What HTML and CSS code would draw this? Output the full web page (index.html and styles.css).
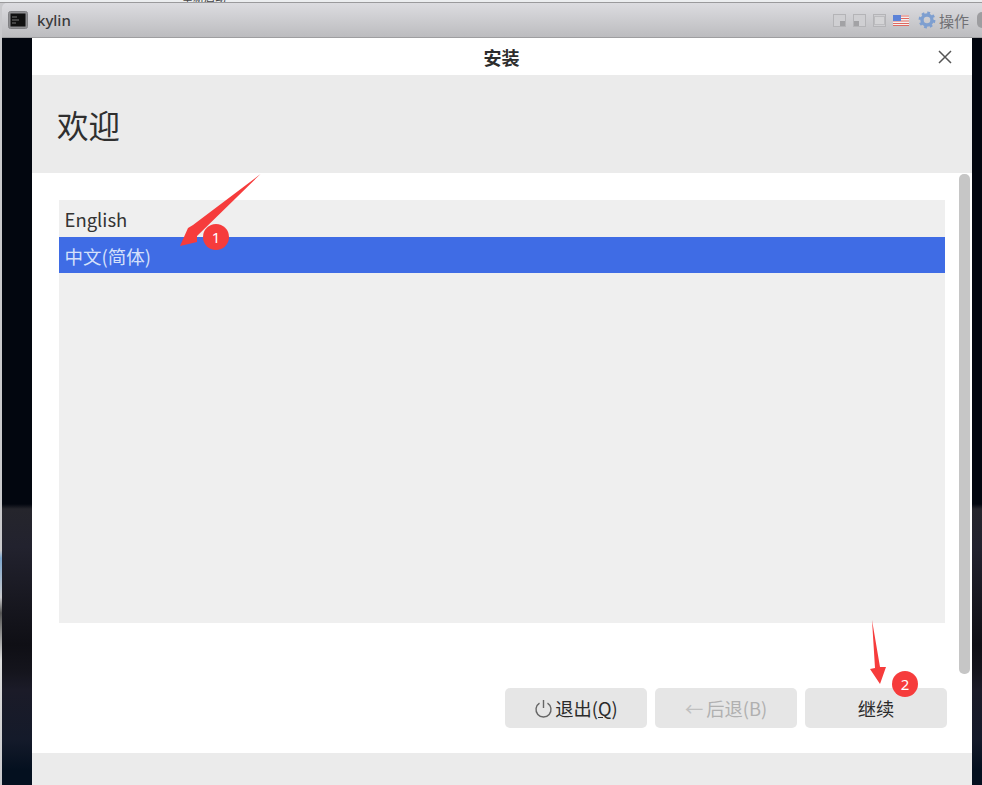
FILE: index.html
```html
<!DOCTYPE html>
<html lang="zh-CN">
<head>
<meta charset="utf-8">
<title>kylin</title>
<link rel="stylesheet" href="styles.css">
</head>
<body>
<div class="screen">
  <div class="topstrip"><span class="cut">重新启动</span></div>
  <div class="vmwindow">
    <header class="vmbar">
      <svg class="vmicon" width="20" height="18" viewBox="0 0 20 18"><rect x="0.5" y="0.5" width="19" height="17" rx="2" fill="#8f8f92" stroke="#808083"/><rect x="2.500" y="2.500" width="15" height="13" fill="#111"/><path d="M4 6h5M4 9h7M4 12h4" stroke="#777" stroke-width="1"/></svg>
      <span class="vmname">kylin</span>
      <div class="vmtools">
        <svg class="wbtn" width="13" height="13" viewBox="0 0 13 13"><rect x="0.5" y="0.5" width="12" height="12" fill="#cfcfd2" stroke="#b4b4b7"/><rect x="7" y="7" width="5" height="5" fill="#a2a2a5"/></svg>
        <svg class="wbtn" width="13" height="13" viewBox="0 0 13 13"><rect x="0.5" y="0.5" width="12" height="12" fill="#cfcfd2" stroke="#b4b4b7"/><rect x="1" y="7" width="5" height="5" fill="#a2a2a5"/></svg>
        <svg class="wbtn" width="13" height="13" viewBox="0 0 13 13"><rect x="0.5" y="0.5" width="12" height="12" fill="#cfcfd2" stroke="#b4b4b7"/><rect x="1.500" y="2.500" width="10" height="8" fill="#d4d4d6" stroke="#bcbcbf"/></svg>
        <svg class="flag" width="16" height="11" viewBox="0 0 16 11"><rect width="16" height="11" fill="#f2f2f2"/><path d="M0 1h16M0 3.500h16M0 6h16M0 8.500h16M0 10.500h16" stroke="#e0685f" stroke-width="1.100"/><rect width="8" height="6" fill="#5b82d8"/></svg>
        <svg class="gear" width="18" height="18" viewBox="0 0 18 18"><circle cx="9" cy="9" r="5" fill="none" stroke="#7e9fd0" stroke-width="3.400"/><circle cx="9" cy="9" r="7.200" fill="none" stroke="#7e9fd0" stroke-width="2.400" stroke-dasharray="2.800 2.860"/></svg>
        <span class="oplabel">操作</span>
        <span class="opdot"></span>
      </div>
    </header>
    <div class="desk">
      <main class="dialog">
        <div class="dlgtitle">
          <span class="dlgname">安装</span>
          <svg class="close" width="14" height="14" viewBox="0 0 14 14"><path d="M1 1l12 12M13 1L1 13" stroke="#555" stroke-width="1.500" fill="none"/></svg>
        </div>
        <div class="banner"><h1 class="welcome">欢迎</h1></div>
        <div class="body">
          <div class="pane">
            <ul class="langs">
              <li class="lang">English</li>
              <li class="lang selected">中文(简体)</li>
            </ul>
            <div class="actions">
              <button class="btn"><svg class="power" width="19" height="19" viewBox="0 0 19 19"><path d="M5.500 4.200a7.500 7.500 0 1 0 8 0" fill="none" stroke="#666" stroke-width="1.400"/><path d="M9.500 1v8" stroke="#666" stroke-width="1.400"/></svg>退出(<u>Q</u>)</button>
              <button class="btn off"><span class="larr">←</span>后退(B)</button>
              <button class="btn">继续</button>
            </div>
          </div>
          <div class="track"><div class="thumb"></div></div>
        </div>
        <div class="foot"></div>
      </main>
    </div>
  </div>
  <svg class="arrow arrow-one" width="90" height="80" viewBox="0 0 90 80"><path d="M85.500 1L22 63 22 69 5 73 13 55 18 52Z" fill="#f63c3c"/></svg>
  <span class="badge badge-one">1</span>
  <svg class="arrow arrow-two" width="20" height="72" viewBox="0 0 20 72"><path d="M3 0L11 47 17 47 11 64 1 49 6 48Z" fill="#f63c3c"/></svg>
  <span class="badge badge-two">2</span>
</div>
</body>
</html>
```
FILE: styles.css
```css
* { box-sizing: border-box; }
html, body { margin: 0; padding: 0; }
body { font-family: "Noto Sans CJK SC", "Noto Sans", sans-serif; color: #333; background: #000; }
.screen { position: relative; width: 982px; height: 785px; overflow: hidden; background: #d8d8da; }
.topstrip { height: 3px; background: #eceef0; border-bottom: 1px solid #9a9a9c; overflow: hidden; position: relative; }
.cut { display: block; margin-left: 182px; font-size: 11px; line-height: 11px; margin-top: -8px; color: #444; }
.vmwindow { height: 782px; display: flex; flex-direction: column; padding-left: 2px; background: linear-gradient(#c9c9cc 0 70%, #7fa8d0 71%, #c9c9cc 76%, #555 78%, #ddd 84%, #c9c9cc 100%); }
.vmbar { height: 35px; flex: none; display: flex; align-items: center; padding: 0 0 0 6px; background: linear-gradient(#dcdce0, #bcbcbf); border-bottom: 1px solid #9e9ea0; border-top-left-radius: 5px; }
.vmicon { flex: none; }
.vmname { margin-left: 9px; font-family: "Noto Sans", sans-serif; font-size: 15px; font-weight: 500; color: #3a3a3a; }
.vmtools { margin-left: auto; display: flex; align-items: center; }
.wbtn { margin-right: 7px; }
.flag { margin-right: 9px; }
.gear { margin-right: 3px; }
.oplabel { font-size: 15px; color: #707074; }
.opdot { width: 5px; height: 16px; margin-left: 8px; border-radius: 8px 0 0 8px; background: #9d9da0; }
.desk { flex: 1; min-height: 0; padding: 0 10px 0 30px; background: linear-gradient(#02060f 0 466px, #25252c 471px, #22222e 509px, #13131a 587px, #0f0f15 607px, #14141c 632px, #1b1b28 652px, #141a2a 702px, #04101f 732px); }
.dialog { height: 100%; display: flex; flex-direction: column; background: #fff; }
.dlgtitle { height: 37px; flex: none; display: flex; align-items: center; justify-content: center; position: relative; background: #fff; }
.dlgname { font-size: 18px; font-weight: 700; color: #2d2d2d; line-height: 24px; margin-right: 1px; }
.close { position: absolute; right: 20px; top: 12px; }
.banner { height: 98px; flex: none; display: flex; align-items: center; padding-left: 25px; background: #ebebeb; }
.welcome { margin: 0; font-size: 31.500px; font-weight: 400; line-height: 44px; color: #2f2f2f; }
.body { flex: none; height: 580px; display: flex; padding-top: 1px; }
.pane { width: 915px; flex: none; padding: 26px 0 0 27px; display: flex; flex-direction: column; }
.langs { margin: 0; padding: 0; list-style: none; width: 886px; height: 423px; flex: none; background: #efefef; }
.lang { height: 36.500px; padding-left: 5.500px; font-size: 18.500px; line-height: 38px; color: #333; }
.selected { height: 36px; background: #3f6ce5; color: #d5e0fa; }
.actions { margin-top: 65px; display: flex; gap: 8px; width: 888px; justify-content: flex-end; }
.btn { width: 142px; height: 40px; padding: 0; border: 0; border-radius: 5px; background: #e6e6e6; display: flex; align-items: center; justify-content: center; font-family: inherit; font-size: 18.300px; color: #2b2b2b; }
.off { color: #b0b0b0; }
.power { margin-right: 2px; }
.larr { margin-right: 3px; color: #c0c0c0; }
.track { width: 11px; margin-left: 12px; height: 500px; flex: none; }
.thumb { height: 500px; border-radius: 5px; background: #c6c6c6; }
.foot { flex: 1; background: #ebebeb; }
.arrow { position: absolute; }
.arrow-one { left: 175px; top: 173px; }
.arrow-two { left: 869px; top: 620px; }
.badge { position: absolute; width: 26px; height: 26px; border-radius: 50%; background: #f63c3c; color: #fff; font-family: "Noto Sans", sans-serif; font-size: 15px; line-height: 26px; text-align: center; }
.badge-one { left: 203px; top: 224px; }
.badge-two { left: 892px; top: 671px; }
```
